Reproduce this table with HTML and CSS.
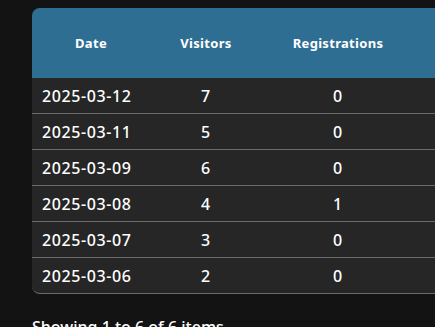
FILE: index.html
```html
<!DOCTYPE html>
<html>
<head>
<meta charset="utf-8">
<link rel="stylesheet" href="styles.css">
</head>
<body>
<div class="page">
  <div class="card">
    <table class="grid">
      <colgroup>
        <col class="c-date"><col class="c-vis"><col class="c-reg"><col class="c-extra">
      </colgroup>
      <thead>
        <tr><th>Date</th><th>Visitors</th><th>Registrations</th><th></th></tr>
      </thead>
      <tbody>
        <tr><td class="d">2025-03-12</td><td>7</td><td>0</td><td></td></tr>
        <tr><td class="d">2025-03-11</td><td>5</td><td>0</td><td></td></tr>
        <tr><td class="d">2025-03-09</td><td>6</td><td>0</td><td></td></tr>
        <tr><td class="d">2025-03-08</td><td>4</td><td>1</td><td></td></tr>
        <tr><td class="d">2025-03-07</td><td>3</td><td>0</td><td></td></tr>
        <tr><td class="d">2025-03-06</td><td>2</td><td>0</td><td></td></tr>
      </tbody>
    </table>
  </div>
  <p class="summary">Showing 1 to 6 of 6 items</p>
</div>
</body>
</html>
```
FILE: styles.css
```css
html, body {
  margin: 0;
  padding: 0;
  background: #131313;
  overflow: hidden;
}
body {
  font-family: "Noto Sans", "Open Sans", sans-serif;
  color: #ffffff;
}
.page {
  padding: 8px 0 0 32px;
}
.card {
  width: 460px;
  background: #262626;
  border-radius: 8px;
  overflow: hidden;
  border-bottom: 1px solid #6a6a6a;
}
.grid {
  width: 100%;
  border-collapse: collapse;
  table-layout: fixed;
}
.c-date { width: 118px; }
.c-vis { width: 112px; }
.c-reg { width: 152px; }
.grid th {
  background: #2f6e93;
  height: 70px;
  padding: 0;
  font-size: 13px;
  font-weight: 700;
  letter-spacing: 0.3px;
  text-align: center;
  vertical-align: middle;
}
.grid td {
  height: 35px;
  padding: 0;
  font-size: 16px;
  font-weight: 500;
  letter-spacing: 0.6px;
  text-align: center;
  vertical-align: middle;
  border-top: 1px solid #6a6a6a;
}
.grid tbody tr:first-child td {
  border-top: none;
}
.grid td.d {
  text-align: left;
  padding-left: 10px;
}
.summary {
  margin: 22px 0 0 0;
  font-size: 16px;
  font-weight: 500;
}
```
